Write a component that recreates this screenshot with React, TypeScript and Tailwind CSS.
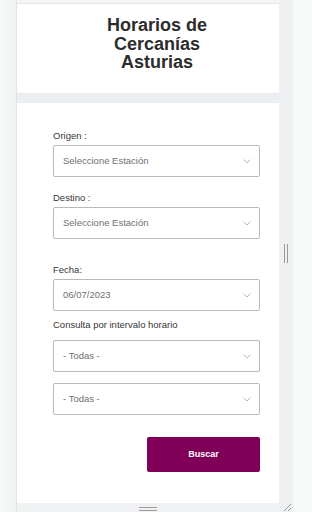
import React from "react";

const font = { fontFamily: '"Liberation Sans", Arial, sans-serif' };

function Chevron() {
  return (
    <svg width="8" height="5" viewBox="0 0 8 5" className="shrink-0">
      <path d="M0.5 0.5 L4 4 L7.5 0.5" fill="none" stroke="#b0b0b0" strokeWidth="0.9" />
    </svg>
  );
}

function SelectBox({ text }: { text: string }) {
  return (
    <div className="h-[32px] w-[207px] border border-[#b9b9b9] rounded-[2px] bg-white flex items-center justify-between pl-[9px] pr-[8px]">
      <span className="text-[9.5px] text-[#6f6f6f]">{text}</span>
      <Chevron />
    </div>
  );
}

function Label({ text, mb = "mb-[2px]" }: { text: string; mb?: string }) {
  return <div className={`text-[9.5px] leading-[14px] text-[#3a3535] ${mb}`}>{text}</div>;
}

export default function App() {
  return (
    <div className="w-[312px] h-[512px] flex overflow-hidden bg-[#f7f8f8]" style={font}>
      <div className="w-[17px] h-full bg-gradient-to-r from-[#f8f9f9] to-[#f0f1f1] border-r border-[#e2e3e3]" />
      <div className="w-[262px] h-full flex flex-col bg-[#f0f1f2]">
        <div className="h-[3px] bg-[#f4f5f5]" />
        <div className="h-[90px] bg-white border-t border-[#e3e4e4] flex justify-center pl-[18px] pt-[12px]">
          <h1 className="text-[18px] leading-[18.5px] font-bold text-[#2c2c2c] text-center">
            Horarios de
            <br />
            Cercanías
            <br />
            Asturias
          </h1>
        </div>
        <div className="h-[10px] bg-[#eceff2]" />
        <div className="h-[400px] bg-white pl-[36px] pt-[26px] flex flex-col">
          <Label text="Origen :" />
          <SelectBox text="Seleccione Estación" />
          <div className="h-[14px]" />
          <Label text="Destino :" />
          <SelectBox text="Seleccione Estación" />
          <div className="h-[24px]" />
          <Label text="Fecha:" />
          <SelectBox text="06/07/2023" />
          <div className="h-[7px]" />
          <Label text="Consulta por intervalo horario" mb="mb-[8px]" />
          <SelectBox text="- Todas -" />
          <div className="h-[11px]" />
          <SelectBox text="- Todas -" />
          <div className="flex w-[207px] justify-end mt-[22px]">
            <button className="w-[113px] h-[35px] rounded-[2px] bg-[#810057] text-white text-[9px] font-bold">
              Buscar
            </button>
          </div>
        </div>
        <div className="flex-1 bg-[#f0f1f2] flex justify-center items-start pt-[4px]">
          <div className="w-[18px] flex flex-col gap-[2px]">
            <div className="h-px bg-[#9a9a9a]" />
            <div className="h-px bg-[#9a9a9a]" />
          </div>
        </div>
      </div>
      <div className="w-[14px] h-full bg-[#eef0f2] flex flex-col">
        <div className="h-[244px]" />
        <div className="flex gap-[2px] pl-[5px]">
          <div className="w-px h-[19px] bg-[#9a9a9a]" />
          <div className="w-px h-[19px] bg-[#9a9a9a]" />
        </div>
        <div className="flex-1" />
        <svg width="10" height="10" viewBox="0 0 10 10" className="ml-[3px]">
          <path d="M9 2 L2 9 M9 6 L6 9" stroke="#9a9a9a" strokeWidth="1" />
        </svg>
      </div>
      <div className="flex-1 h-full bg-[#f7f8f8]" />
    </div>
  );
}
